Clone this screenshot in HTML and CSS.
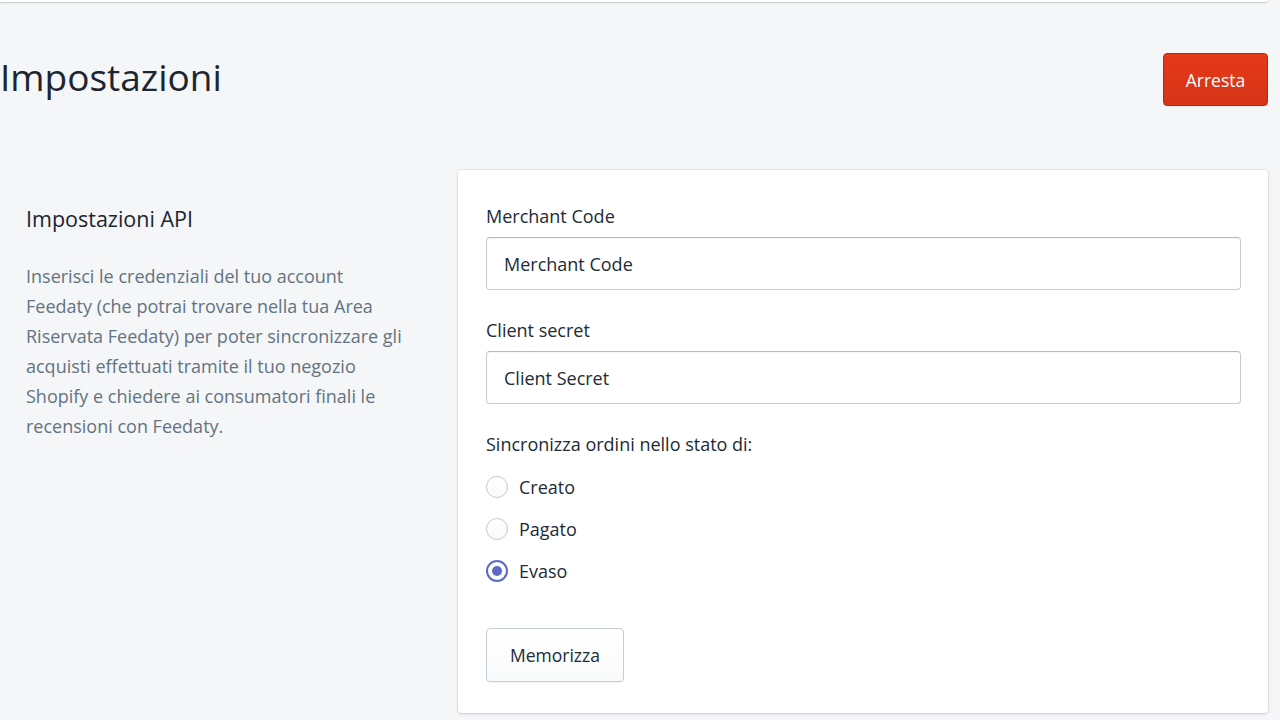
FILE: index.html
```html
<!DOCTYPE html>
<html lang="it">
<head>
<meta charset="utf-8">
<title>Impostazioni</title>
<link rel="stylesheet" href="styles.css">
</head>
<body>
<div class="page">
  <div class="topbar"></div>
  <header class="page-header">
    <h1 class="page-title">Impostazioni</h1>
    <button class="btn btn-destructive" type="button">Arresta</button>
  </header>
  <section class="layout">
    <div class="annotation">
      <h2 class="annotation-title">Impostazioni API</h2>
      <p class="annotation-text">Inserisci le credenziali del tuo account Feedaty (che potrai trovare nella tua Area Riservata Feedaty) per poter sincronizzare gli acquisti effettuati tramite il tuo negozio Shopify e chiedere ai consumatori finali le recensioni con Feedaty.</p>
    </div>
    <div class="card">
      <div class="field">
        <label class="label" for="merchant">Merchant Code</label>
        <input class="input" id="merchant" type="text" value="Merchant Code">
      </div>
      <div class="field">
        <label class="label" for="secret">Client secret</label>
        <input class="input" id="secret" type="text" value="Client Secret">
      </div>
      <div class="field">
        <div class="label">Sincronizza ordini nello stato di:</div>
        <ul class="choices">
          <li class="choice"><span class="radio"></span><span class="choice-label">Creato</span></li>
          <li class="choice"><span class="radio"></span><span class="choice-label">Pagato</span></li>
          <li class="choice"><span class="radio radio-checked"></span><span class="choice-label">Evaso</span></li>
        </ul>
      </div>
      <div class="actions">
        <button class="btn btn-basic" type="button">Memorizza</button>
      </div>
    </div>
  </section>
</div>
</body>
</html>
```

FILE: styles.css
```css
* { box-sizing: border-box; }

html, body {
  margin: 0;
  padding: 0;
  background: #f4f6f8;
  font-family: "Open Sans", "Noto Sans", sans-serif;
  color: #212b36;
  overflow: hidden;
}

.page {
  width: 1268px;
  height: 720px;
}

.topbar {
  height: 2px;
  width: 1267px;
  background: #fff;
  box-shadow: 0 1px 2px rgba(63, 63, 68, 0.2), 0 0 0 1px rgba(200, 220, 180, 0.35);
}

.page-header {
  display: flex;
  justify-content: space-between;
  align-items: flex-start;
  padding-top: 51px;
  height: 168px;
}

.page-title {
  margin: 0;
  font-size: 37px;
  font-weight: 400;
  line-height: 48px;
  color: #1c2530;
}

.btn {
  font-family: inherit;
  font-size: 17.5px;
  border-radius: 4px;
  cursor: pointer;
}

.btn-destructive {
  margin-top: 0;
  width: 105px;
  height: 53px;
  color: #fff;
  background: linear-gradient(to bottom, #e6391a, #d53417);
  border: 1px solid #b02b13;
  box-shadow: inset 0 1px 0 0 #e73b1c, 0 1px 0 0 rgba(22, 29, 37, 0.05);
}

.layout {
  display: flex;
  align-items: flex-start;
}

.annotation {
  width: 458px;
  padding: 0 26px;
}

.annotation-title {
  margin: 35px 0 0;
  font-size: 21.5px;
  font-weight: 400;
  line-height: 28px;
  color: #1c2530;
}

.annotation-text {
  margin: 28px 0 0;
  width: 382px;
  font-size: 18px;
  line-height: 30px;
  color: #637381;
}

.card {
  width: 810px;
  height: 543px;
  background: #fff;
  border-radius: 4px;
  box-shadow: 0 0 0 1px rgba(63, 63, 68, 0.06), 0 1px 3px 0 rgba(63, 63, 68, 0.18);
  padding: 32px 27px 0 28px;
}

.field + .field {
  margin-top: 26px;
}

.label {
  display: block;
  font-size: 18px;
  line-height: 28px;
  color: #212b36;
}

.input {
  display: block;
  width: 100%;
  height: 53px;
  margin-top: 7px;
  padding: 0 17px;
  font-family: inherit;
  font-size: 18px;
  color: #212b36;
  background: #fff;
  border: 1px solid #c4cdd5;
  border-top-color: #aebac4;
  border-radius: 4px;
  box-shadow: inset 0 1px 0 0 rgba(99, 115, 129, 0.05);
  outline: none;
}

.choices {
  list-style: none;
  margin: 8px 0 0;
  padding: 0;
}

.choice {
  display: flex;
  align-items: center;
  height: 42px;
}

.radio {
  width: 22px;
  height: 22px;
  border-radius: 50%;
  border: 1px solid #c4cdd5;
  background: linear-gradient(to bottom, #fff, #f9fafb);
  box-shadow: 0 0 0 1px rgba(0, 0, 0, 0.02);
  display: flex;
  align-items: center;
  justify-content: center;
  flex: none;
}

.radio-checked {
  border: 2px solid #5c6ac4;
}

.radio-checked::after {
  content: "";
  width: 10px;
  height: 10px;
  border-radius: 50%;
  background: #5c6ac4;
}

.choice-label {
  margin-left: 11px;
  font-size: 18px;
  color: #212b36;
}

.actions {
  margin-top: 36px;
}

.btn-basic {
  width: 138px;
  height: 54px;
  color: #212b36;
  background: linear-gradient(to bottom, #fff, #f9fafb);
  border: 1px solid #c4cdd5;
  box-shadow: 0 1px 0 0 rgba(22, 29, 37, 0.05);
}
```
